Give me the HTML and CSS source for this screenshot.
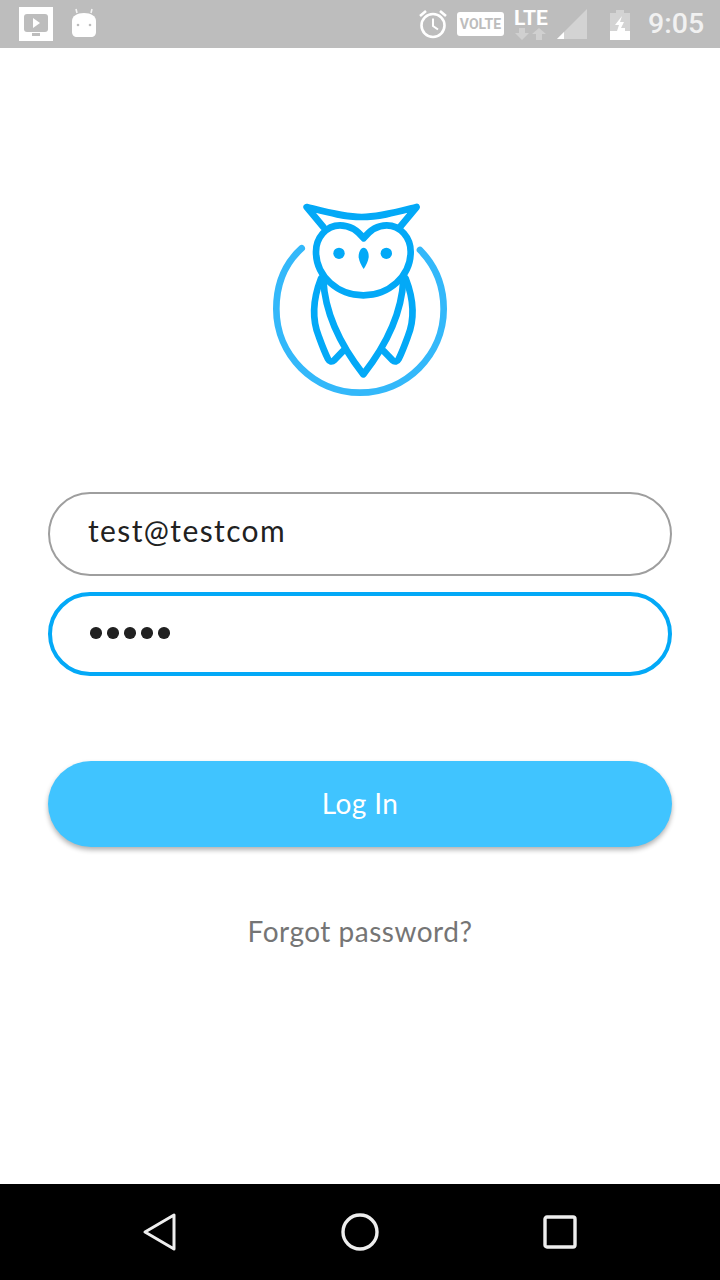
FILE: index.html
```html
<!DOCTYPE html>
<html lang="en">
<head>
<meta charset="utf-8">
<title>Log In</title>
<link rel="stylesheet" href="styles.css">
</head>
<body>
<div class="screen">
  <header class="status-bar">
    <div class="status-left">
      <svg class="ico-tv" width="34" height="34" viewBox="0 0 34 34"><path fill="#fff" d="M0 0h34v34H0z"/><rect x="5" y="7" width="24" height="18" rx="3" fill="#bdbdbd"/><path d="M14 11l7 5-7 5z" fill="#fff"/><rect x="13" y="26" width="8" height="3" fill="#bdbdbd"/></svg>
      <svg class="ico-android" width="26" height="30" viewBox="0 0 26 30"><path d="M6 5L5 1M20 5l1-4" stroke="#f4f4f4" stroke-width="1.6" fill="none"/><path d="M1 13c0-5 5-8 12-8s12 3 12 8v11c0 3-2 5-5 5H6c-3 0-5-2-5-5z" fill="#fff"/><circle cx="7" cy="17" r="1.3" fill="#bdbdbd"/><circle cx="19" cy="17" r="1.3" fill="#bdbdbd"/></svg>
    </div>
    <div class="status-right">
      <svg class="ico-alarm" width="30" height="30" viewBox="0 0 30 30"><circle cx="15" cy="16.500" r="11.500" fill="none" stroke="#fff" stroke-width="2.600"/><path d="M15 9.500v7.500l5 3.500" fill="none" stroke="#fff" stroke-width="2"/><path d="M2 7l6-5M28 7l-6-5" stroke="#fff" stroke-width="2.600" fill="none"/></svg>
      <span class="volte">VOLTE</span>
      <div class="lte">
        <span class="lte-text">LTE</span>
        <svg width="32" height="12" viewBox="0 0 32 12"><path d="M4 0h6v5h4l-7 7-7-7h4z" fill="#d0d0d0"/><path d="M24 0l7 6h-4v6h-6V6h-4z" fill="#d0d0d0"/></svg>
      </div>
      <svg class="ico-signal" width="30" height="30" viewBox="0 0 30 30"><path d="M0 30L30 0v30z" fill="#d3d3d3"/><path d="M0 30l7-7v7z" fill="#fff"/></svg>
      <svg class="ico-battery" width="20" height="30" viewBox="0 0 20 30"><path d="M6 0h8v3h6v27H0V3h6z" fill="#d3d3d3"/><path d="M0 21h20v9H0z" fill="#fff"/><path d="M12 6l-7 9h4l-2 6h8v-3h-4l3-6h-4z" fill="#fff"/></svg>
      <span class="clock">9:05</span>
    </div>
  </header>

  <main class="content">
    <svg class="logo" width="200" height="210" viewBox="0 0 600 630" fill="none" stroke-linecap="round" stroke-linejoin="round">
      <path class="ring" d="M125 160C75 205 49 270 49 342c0 138 113 251 251 251s251-113 251-251c0-70-27-132-71-177"/>
      <g class="owl">
        <path d="M311 130C292 105 265 91 240 91c-42 0-72 38-72 79 0 75 67 131 142 131s142-56 142-131c0-41-30-79-72-79-27 0-50 14-69 39z"/>
        <path d="M190 96L140 36c55 14 110 30 165 30 55 0 110-16 165-30l-50 60"/>
        <path d="M183 250c-24 62-27 125-6 176 8 22 18 48 27 66 4 8 12 10 18 4l26-27"/>
        <path d="M190 255c5 100 55 200 120 283 65-83 115-183 120-283"/>
        <path d="M437 250c24 62 27 125 6 176-8 22-18 48-27 66-4 8-12 10-18 4l-26-27"/>
      </g>
      <circle class="dot" cx="237" cy="175" r="17"/>
      <circle class="dot" cx="379" cy="175" r="17"/>
      <path class="dot" d="M311 158c10 0 16 16 15 29-1 12-9 26-15 35-6-9-14-23-15-35-1-13 5-29 15-29z"/>
    </svg>

    <form class="form">
      <div class="field field-idle">test@testcom</div>
      <div class="field field-focus"><span class="dots"><i></i><i></i><i></i><i></i><i></i></span></div>
      <button class="login" type="button">Log In</button>
      <a class="forgot">Forgot password?</a>
    </form>
  </main>

  <nav class="nav-bar">
    <svg width="36" height="40" viewBox="0 0 36 40"><path d="M33 3v34L4 20z" fill="none" stroke="#eee" stroke-width="3" stroke-linejoin="round"/></svg>
    <svg width="40" height="40" viewBox="0 0 40 40"><circle cx="20" cy="20" r="17" fill="none" stroke="#eee" stroke-width="3.400"/></svg>
    <svg width="36" height="36" viewBox="0 0 36 36"><rect x="3" y="3" width="30" height="30" rx="2" fill="none" stroke="#eee" stroke-width="3.400"/></svg>
  </nav>
</div>
</body>
</html>
```
FILE: styles.css
```css
* { box-sizing: border-box; }
html, body { margin: 0; padding: 0; }
body { font-family: "Lato", "Liberation Sans", sans-serif; background: #fff; }
.screen { width: 720px; height: 1280px; display: flex; flex-direction: column; overflow: hidden; }

.status-bar { height: 48px; background: #bdbdbd; display: flex; justify-content: space-between; align-items: center; padding: 0 17px 0 19px; flex: none; }
.status-left { display: flex; align-items: center; gap: 19px; }
.ico-android { margin-top: -2px; margin-left: -1px; }
.status-right { display: flex; align-items: center; }
.ico-alarm { margin-right: 9px; }
.volte { width: 47px; height: 24px; background: #fff; border-radius: 3px; color: #bdbdbd; font: 700 14px/24px "Roboto", sans-serif; text-align: center; margin-right: 9px; }
.lte { display: flex; flex-direction: column; align-items: center; width: 36px; margin-top: -1px; margin-right: 8px; }
.lte-text { color: #fff; font: 700 21px/20px "Roboto", sans-serif; }
.ico-signal { margin-right: 23px; margin-top: -1px; }
.ico-battery { margin-right: 18px; margin-top: 1px; }
.clock { color: #f1f1f1; font: 500 28.500px/34px "Roboto", sans-serif; width: 55px; }

.content { flex: 1; display: flex; flex-direction: column; align-items: center; padding-top: 147px; }
.logo { flex: none; }
.ring { stroke: #33b8fa; stroke-width: 20; }
.owl { stroke: #03a9f7; stroke-width: 20; }
.dot { fill: #03a9f7; }

.form { width: 624px; display: flex; flex-direction: column; margin-top: 87px; }
.field { height: 84px; border-radius: 42px; display: flex; align-items: center; padding-left: 38px; color: #212121; font-size: 30px; background: #fff; }
.field-idle { border: 2px solid #9e9e9e; letter-spacing: 1.400px; padding-bottom: 8px; }
.field-focus { border: 4px solid #03a9f7; margin-top: 16px; padding-left: 38px; }
.dots { display: flex; gap: 5.500px; margin-top: -2px; }
.dots i { width: 11.500px; height: 11.500px; border-radius: 50%; background: #212121; }
.login { height: 86px; margin-top: 85px; border: 0; border-radius: 43px; background: #40c4ff; color: #fff; font: 400 28px "Lato", sans-serif; letter-spacing: 0.400px; box-shadow: 0 3px 5px rgba(0,0,0,.3); padding: 0 0 2px; }
.forgot { margin-top: 67px; text-align: center; color: #757575; font-size: 28px; line-height: 34px; letter-spacing: 0.500px; }

.nav-bar { height: 96px; background: #000; display: flex; justify-content: center; align-items: center; flex: none; padding-right: 2px; }
.nav-bar svg { margin-top: -1px; }
.nav-bar svg:nth-child(1) { margin-right: 163px; }
.nav-bar svg:nth-child(3) { margin-left: 162px; }
```
